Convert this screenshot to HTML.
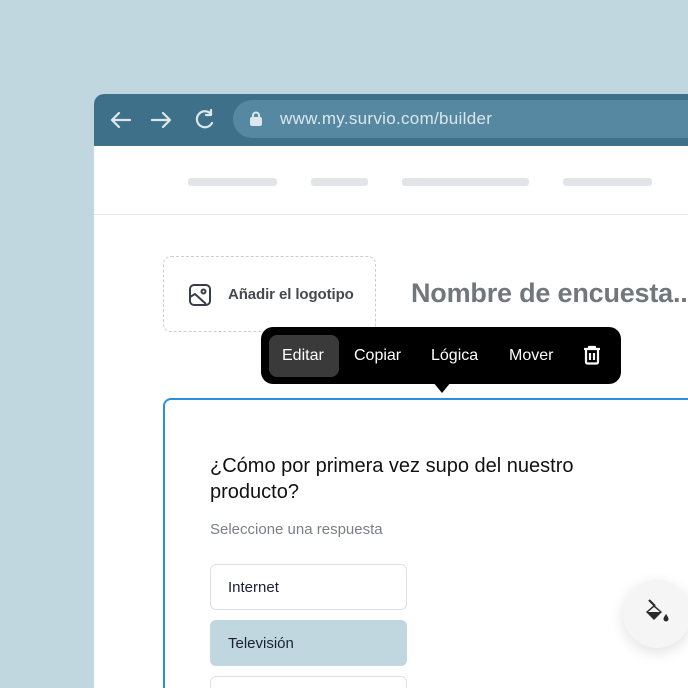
<!DOCTYPE html>
<html style="overflow:hidden;width:688px;height:688px"><head><style>
*{margin:0;padding:0;box-sizing:border-box}
body{width:688px;height:688px;overflow:hidden;background:#c1d7df;font-family:"Liberation Sans",sans-serif;position:relative}
.a{position:absolute}
.bar{background:#e3e4e8;height:8px;border-radius:3px;top:178px}
.opt{position:absolute;left:210px;width:197px;height:46px;border:1px solid #dde1e6;border-radius:6px;background:#fff;font-size:15px;color:#1a1f36;padding:14px 0 0 17px}
</style></head><body>
<div class="a" style="left:94px;top:94px;width:594px;height:594px;background:#fff;border-radius:10px 0 0 0;overflow:hidden">
 <div class="a" style="left:0;top:0;width:594px;height:52px;background:#3e7189"></div>
 <div class="a" style="left:139px;top:6px;width:500px;height:38px;background:#5689a1;border-radius:19px"></div>
</div>
<svg class="a" style="left:108px;top:108px" width="120" height="26" fill="none" stroke="#dbe7ec" stroke-width="2.2" stroke-linecap="round" stroke-linejoin="round">
<path d="M22 12H4M11 5L4 12L11 19"/>
<path d="M44 12H62M55 5L62 12L55 19"/>
<path d="M103 6A8 8 0 1 0 104 15"/><path d="M103 2V7H98"/>
</svg>
<svg class="a" style="left:249px;top:111px" width="14" height="16"><rect x="1" y="6" width="12" height="9" rx="2" fill="#dbe7ec"/><path d="M4 7V4.5a3 3 0 0 1 6 0V7" stroke="#dbe7ec" stroke-width="2" fill="none"/></svg>
<div class="a" style="left:280px;top:109px;font-size:17px;color:#dbe7ec;letter-spacing:0.3px">www.my.survio.com/builder</div>
<div class="a bar" style="left:188px;width:89px"></div>
<div class="a bar" style="left:311px;width:57px"></div>
<div class="a bar" style="left:402px;width:127px"></div>
<div class="a bar" style="left:563px;width:89px"></div>
<div class="a" style="left:94px;top:214px;width:594px;height:1px;background:#e4e6ea"></div>
<div class="a" style="left:163px;top:256px;width:213px;height:76px;border:1px dashed #c9ccd1;border-radius:8px"></div>
<svg class="a" style="left:188px;top:283px" width="24" height="24" fill="none" stroke="#3a3f45" stroke-width="2" stroke-linejoin="round"><rect x="2" y="2" width="20" height="20" rx="4"/><circle cx="15.5" cy="8.5" r="2"/><path d="M2 14L7 11L18 21"/></svg>
<div class="a" style="left:228px;top:286px;font-size:15px;color:#45494f;font-weight:bold;letter-spacing:-0.1px">Añadir el logotipo</div>
<div class="a" style="left:411px;top:278px;font-size:27px;color:#72777c;font-weight:bold;white-space:nowrap;letter-spacing:-0.2px">Nombre de encuesta...</div>
<div class="a" style="left:163px;top:398px;width:560px;height:320px;border:2px solid #2f8fdf;border-radius:8px"></div>
<div class="a" style="left:210px;top:453px;font-size:20px;line-height:26px;color:#111">¿Cómo por primera vez supo del nuestro<br>producto?</div>
<div class="a" style="left:210px;top:521px;font-size:15px;color:#7b8087">Seleccione una respuesta</div>
<div class="opt" style="top:564px">Internet</div>
<div class="opt" style="top:620px;background:#c1d7df;border-color:#c1d7df">Televisión</div>
<div class="opt" style="top:676px"></div>
<div class="a" style="left:261px;top:327px;width:360px;height:57px;background:#000;border-radius:12px"></div>
<div class="a" style="left:433px;top:382px;width:0;height:0;border-left:9px solid transparent;border-right:9px solid transparent;border-top:11px solid #000"></div>
<div class="a" style="left:269px;top:335px;width:70px;height:42px;background:#3a3a3a;border-radius:8px"></div>
<div class="a" style="top:347px;left:282px;font-size:16px;color:#fff">Editar</div>
<div class="a" style="top:347px;left:354px;font-size:16px;color:#fff">Copiar</div>
<div class="a" style="top:347px;left:431px;font-size:16px;color:#fff">Lógica</div>
<div class="a" style="top:347px;left:509px;font-size:16px;color:#fff">Mover</div>
<svg class="a" style="left:582px;top:345px" width="20" height="20" fill="none" stroke="#fff" stroke-width="2.2" stroke-linejoin="round"><path d="M2 4H18M7 4V2H13V4"/><path d="M4 5V17A1.5 1.5 0 0 0 5.5 18.5H14.5A1.5 1.5 0 0 0 16 17V5"/><path d="M8 8V15M12 8V15"/></svg>
<div class="a" style="left:623px;top:580px;width:68px;height:68px;border-radius:50%;background:#f5f5f6;box-shadow:0 4px 14px rgba(0,0,0,0.12)"></div>
<svg class="a" style="left:643px;top:598px" width="30" height="30"><path d="M6 2L12 8" stroke="#2a2a2a" stroke-width="2.2"/><path d="M3 14L11 7L19 14L11 22Z" fill="#2a2a2a"/><path d="M5 14L11 9L17 14Z" fill="#f5f5f6"/><path d="M23 16C21 19 20.5 20 20.5 21A2.5 2.5 0 0 0 25.5 21C25.5 20 25 19 23 16Z" fill="#2a2a2a"/></svg>
</body></html>
